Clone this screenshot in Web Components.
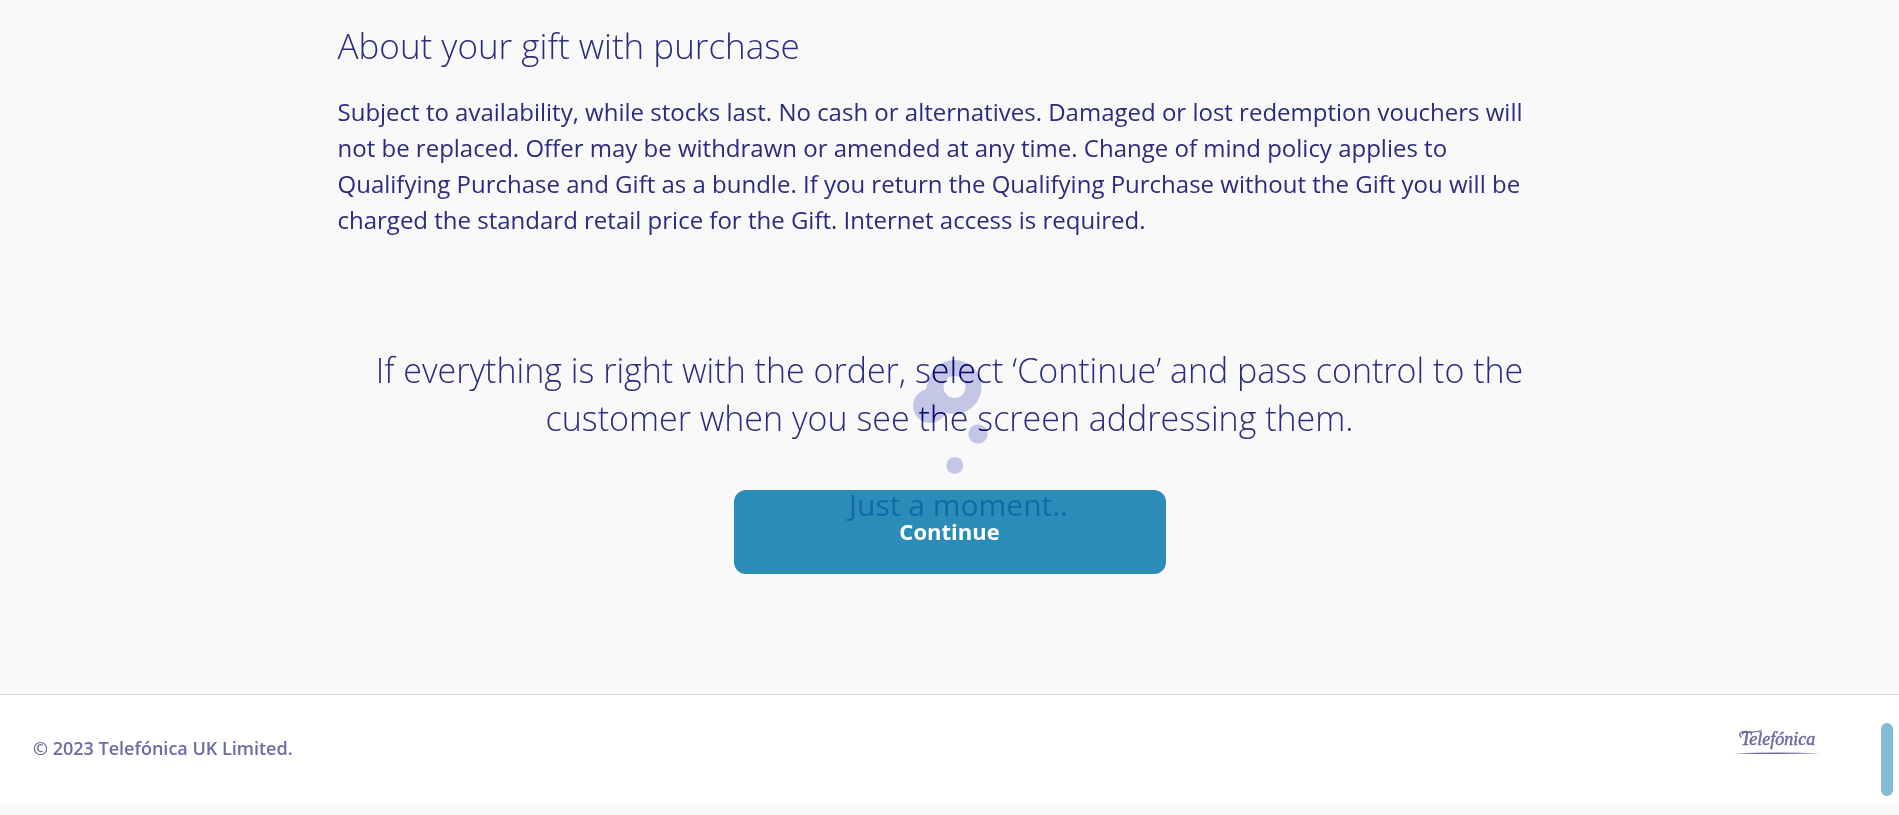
<!DOCTYPE html>
<html lang="en">
<head>
<meta charset="utf-8">
<title>Order review</title>
<style>
  html { background: #f9f9f9; }
  body { margin: 0; font-family: "Open Sans", "Noto Sans", sans-serif; color: #2b2b80; background: #f9f9f9; }
</style>
</head>
<body>
<order-page>
  <terms-section heading="About your gift with purchase">Subject to availability, while stocks last. No cash or alternatives. Damaged or lost redemption vouchers will not be replaced. Offer may be withdrawn or amended at any time. Change of mind policy applies to Qualifying Purchase and Gift as a bundle. If you return the Qualifying Purchase without the Gift you will be charged the standard retail price for the Gift. Internet access is required.</terms-section>
  <handover-prompt action="Continue">If everything is right with the order, select ‘Continue’ and pass control to the customer when you see the screen addressing them.</handover-prompt>
  <loading-indicator slot="overlay">Just a moment..</loading-indicator>
  <site-footer slot="footer">© 2023 Telefónica UK Limited.<brand-logo slot="logo"></brand-logo></site-footer>
  <scroll-thumb slot="overlay"></scroll-thumb>
</order-page>
<script>
  const define = (name, html, setup) => {
    const template = document.createElement('template');
    template.innerHTML = html;
    customElements.define(name, class extends HTMLElement {
      connectedCallback() {
        if (this.shadowRoot) return;
        const root = this.attachShadow({ mode: 'open' });
        root.append(template.content.cloneNode(true));
        if (setup) setup(root, this);
      }
    });
  };

  define('order-page', `
    <style>
      :host { display: block; position: relative; }
      main { box-sizing: border-box; max-width: 1272px; margin: 0 auto; padding: 22px 24px 120px; }
    </style>
    <main><slot></slot></main>
    <slot name="footer"></slot>
    <slot name="overlay"></slot>`);

  define('terms-section', `
    <style>
      :host { display: block; }
      h2 { margin: 0 0 24px; font-size: 35px; line-height: 48px; font-weight: 300; }
      p { margin: 0; font-size: 24px; line-height: 36px; }
    </style>
    <section><h2></h2><p><slot></slot></p></section>`,
    (root, host) => { root.querySelector('h2').textContent = host.getAttribute('heading'); });

  define('handover-prompt', `
    <style>
      :host { display: flex; flex-direction: column; align-items: center; gap: 48px; margin-top: 108px; }
      p { margin: 0; font-size: 34px; line-height: 48px; font-weight: 300; text-align: center; }
      button { box-sizing: border-box; width: 432px; max-width: 100%; height: 84px; padding: 0 12px 2px; border: 0;
        border-radius: 12px; background: #2c8cb8; color: #fff; font: 700 22px/24px "Open Sans", "Noto Sans", sans-serif; cursor: pointer; }
    </style>
    <p><slot></slot></p>
    <button type="button"></button>`,
    (root, host) => { root.querySelector('button').textContent = host.getAttribute('action'); });

  define('loading-indicator', `
    <style>
      :host { position: absolute; top: 354px; left: 0; right: 0; display: flex; flex-direction: column;
        align-items: center; gap: 13px; padding-left: 18px; color: #1d2312; mix-blend-mode: difference; pointer-events: none; }
      svg { display: block; width: 96px; height: 126px; }
      span { font-size: 30px; line-height: 24px; }
    </style>
    <svg viewBox="911 354 96 126" fill="#353313" aria-hidden="true">
      <circle cx="954.500" cy="387" r="19" fill="none" stroke="#353313" stroke-width="16"/>
      <circle cx="930" cy="406" r="17"/>
      <path d="M927 384Q927 391 920 396L932 423Q937 421 942 416Q946 411 952 414L941 398L936 386Z"/>
      <circle cx="978" cy="434" r="9.700"/><circle cx="954.800" cy="465.500" r="8.500"/>
    </svg>
    <span role="status"><slot></slot></span>`);

  define('site-footer', `
    <style>
      :host { display: block; }
      footer { display: flex; align-items: flex-start; justify-content: space-between; box-sizing: border-box;
        min-height: 109px; margin-bottom: 12px; padding: 32px 78px 32px 33px; border-top: 1px solid #d8d8d8; background: #fff; }
      p { margin: 9px 0 0; color: #6b6ba6; font-size: 18px; line-height: 24px; font-weight: 600; }
    </style>
    <footer><p><slot></slot></p><slot name="logo"></slot></footer>`);

  define('brand-logo', `
    <style>
      :host { display: block; }
      svg { display: block; width: 88px; height: 30px; }
      text { font: italic 400 18px "Liberation Serif", serif; }
    </style>
    <svg viewBox="0 0 88 30" fill="#6b6ba6" role="img" aria-label="Telefónica">
      <text x="8" y="18" stroke="#6b6ba6" stroke-width=".5">Telefónica</text>
      <path d="M8 10C5 7 8 4 13 4.500Q20 6 28 3.500" fill="none" stroke="#6b6ba6" stroke-width="1.300" stroke-linecap="round"/>
      <path d="M0 26.500Q44 24.500 88 26.500Q44 27.500 0 26.500Z"/>
    </svg>`);

  define('scroll-thumb', `
    <style>
      :host { position: fixed; right: 6px; bottom: 19px; width: 12px; height: 73px; border-radius: 6px; background: #85bbd8; }
    </style>`);
</script>
</body>
</html>
